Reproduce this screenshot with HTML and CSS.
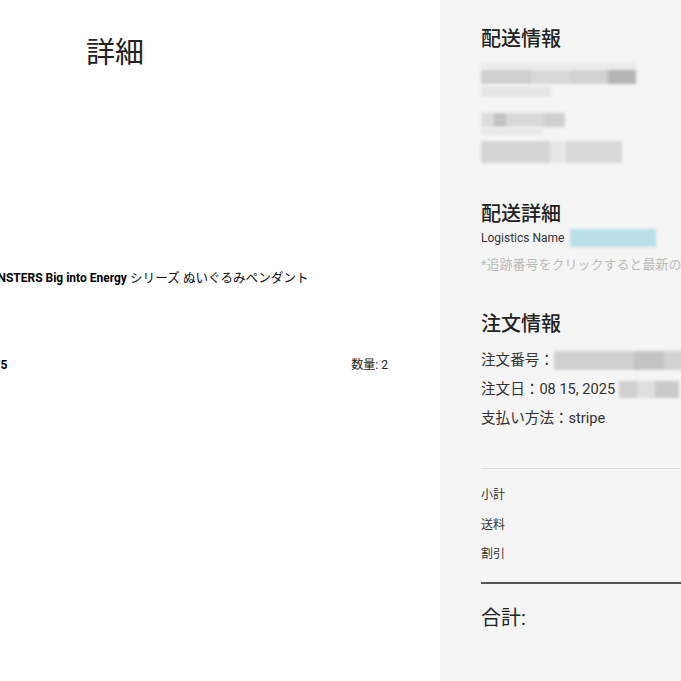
FILE: index.html
```html
<!DOCTYPE html>
<html lang="ja">
<head>
    <meta charset="UTF-8">
    <meta name="viewport" content="width=device-width, initial-scale=1.0">
    <title>注文詳細</title>
    <link rel="stylesheet" href="styles.css">
</head>
<body>
    <div class="page">
        <div class="main">
            <h1 class="page-title">詳細</h1>

            <div class="product">
                <div class="product-info">
                    <p class="product-name"><strong>THE MONSTERS Big into Energy</strong> シリーズ ぬいぐるみペンダント</p>
                    <div class="product-meta">
                        <span class="price">JP¥ 2,475</span>
                        <span class="qty">数量: 2</span>
                    </div>
                </div>
            </div>
        </div>

        <div class="sidebar">
            <div class="section">
                <h2 class="section-title">配送情報</h2>
                <div class="address">
                    <div class="blur blur-a"></div>
                    <div class="blur blur-b"></div>
                    <div class="blur blur-c"></div>
                    <div class="blur blur-d"></div>
                    <div class="blur blur-e"></div>
                </div>
            </div>

            <div class="section section-shipping">
                <h2 class="section-title">配送詳細</h2>
                <div class="logistics">
                    <span>Logistics Name</span>
                    <span class="blur blur-link"></span>
                </div>
                <p class="note">*追跡番号をクリックすると最新の配送状況を確認できます</p>
            </div>

            <div class="section section-order">
                <h2 class="section-title">注文情報</h2>
                <div class="order-rows">
                    <div class="order-row">注文番号：<span class="blur blur-long"></span></div>
                    <div class="order-row">注文日：08 15, 2025 <span class="blur blur-time"></span></div>
                    <div class="order-row">支払い方法：stripe</div>
                </div>
            </div>

            <div class="summary">
                <div class="summary-row">小計</div>
                <div class="summary-row">送料</div>
                <div class="summary-row">割引</div>
            </div>

            <div class="total">合計:</div>
        </div>
    </div>
</body>
</html>
```

FILE: styles.css
```css
html, body {
    margin: 0;
    padding: 0;
    overflow: hidden;
}
body {
    font-family: Roboto, "Noto Sans CJK JP", sans-serif;
    color: #222;
    background-color: #fff;
}
.page {
    display: flex;
    width: 900px;
    min-height: 100vh;
}
.main {
    width: 440px;
    flex-shrink: 0;
    padding: 33px 52px 0 0;
    box-sizing: border-box;
}
.page-title {
    margin: 0 0 0 86px;
    font-size: 29px;
    font-weight: 400;
    line-height: 40px;
    color: #222;
}
.product {
    margin-top: 196px;
}
.product-info {
    margin-left: -47px;
}
.product-name {
    margin: 0;
    font-size: 12.6px;
    line-height: 18px;
    color: #111;
    white-space: nowrap;
}
.product-name strong {
    font-size: 12px;
    font-weight: 700;
    color: #000;
}
.product-meta {
    display: flex;
    justify-content: space-between;
    margin-top: 69px;
    font-size: 12px;
    line-height: 18px;
}
.price {
    font-weight: 700;
    color: #000;
}
.qty {
    color: #222;
}

/* right column */
.sidebar {
    width: 460px;
    flex-shrink: 0;
    background-color: #f5f5f5;
    padding: 25px 40px 0 41px;
    box-sizing: border-box;
}
.section-title {
    margin: 0;
    font-size: 20px;
    font-weight: 500;
    line-height: 28px;
    color: #222;
}
.blur {
    display: block;
    filter: blur(1.5px);
}
.address {
    margin-top: 9px;
}
.blur-a {
    width: 155px;
    height: 22px;
    background:
        linear-gradient(#ececec 0 8px, transparent 8px),
        linear-gradient(90deg, #cfcfcf 0 32%, #d8d8d8 32% 58%, #d2d2d2 58% 82%, #b5b5b5 82% 100%);
}
.blur-b {
    width: 70px;
    height: 11px;
    margin-top: 2px;
    background-color: #e6e6e6;
}
.blur-c {
    width: 84px;
    height: 14px;
    margin-top: 16px;
    background: linear-gradient(90deg, #dcdcdc 0 16%, #c2c2c2 16% 30%, #d8d8d8 30% 75%, #d0d0d0 75% 100%);
}
.blur-d {
    width: 62px;
    height: 7px;
    margin-top: 1px;
    background-color: #e8e8e8;
}
.blur-e {
    width: 141px;
    height: 22px;
    margin-top: 6px;
    background: linear-gradient(90deg, #d4d4d4 0 49%, #e6e6e6 49% 60%, #d8d8d8 60% 100%);
}
.section-shipping {
    margin-top: 37px;
}
.logistics {
    display: flex;
    align-items: center;
    gap: 6px;
    margin-top: 1px;
    font-size: 12px;
    line-height: 18px;
    color: #333;
}
.blur-link {
    width: 86px;
    height: 18px;
    background-color: #b9dfe7;
}
.note {
    margin: 9px 0 0;
    font-size: 13px;
    line-height: 18px;
    color: #bbb;
    white-space: nowrap;
}
.section-order {
    margin-top: 36px;
}
.order-rows {
    margin-top: 8px;
}
.order-row {
    display: flex;
    align-items: center;
    font-size: 14.6px;
    line-height: 29px;
    color: #333;
    white-space: nowrap;
}
.blur-long {
    width: 200px;
    height: 19px;
    background: linear-gradient(90deg, #d0d0d0 0 40%, #c4c4c4 40% 55%, #d2d2d2 55% 80%, #c6c6c6 80%);
}
.blur-time {
    width: 60px;
    height: 17px;
    margin-left: 4px;
    background: linear-gradient(90deg, #cfcfcf 0 30%, #dedede 30% 60%, #cacaca 60%);
}
.summary {
    margin-top: 35px;
    padding: 12px 0 12px;
    border-top: 1px solid #ddd;
    border-bottom: 2px solid #555;
}
.summary-row {
    font-size: 12px;
    line-height: 29.5px;
    color: #333;
}
.total {
    margin-top: 20px;
    font-size: 20px;
    line-height: 28px;
    color: #222;
}
```
